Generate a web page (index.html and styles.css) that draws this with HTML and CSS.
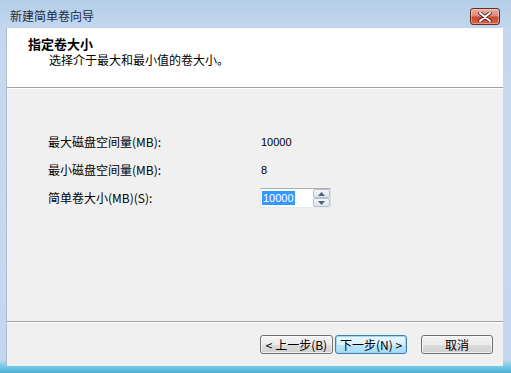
FILE: index.html
```html
<!DOCTYPE html>
<html lang="zh-CN">
<head>
<meta charset="utf-8">
<title>新建简单卷向导</title>
<link rel="stylesheet" href="styles.css">
</head>
<body>
<div class="window">
  <div class="titlebar">
    <span class="title">新建简单卷向导</span>
    <button class="close" aria-label="关闭">
      <svg width="14" height="10" viewBox="0 0 14 10">
        <path d="M2 1 L12 9 M12 1 L2 9" stroke="#5a1a12" stroke-width="3.6" stroke-linecap="round"/>
        <path d="M2 1 L12 9 M12 1 L2 9" stroke="#ffffff" stroke-width="2" stroke-linecap="round"/>
      </svg>
    </button>
  </div>
  <div class="client">
    <div class="header">
      <div class="h-title">指定卷大小</div>
      <div class="h-sub">选择介于最大和最小值的卷大小。</div>
    </div>
    <div class="main">
      <div class="fields">
        <div class="label">最大磁盘空间量(MB):</div>
        <div class="value">10000</div>
        <div class="label">最小磁盘空间量(MB):</div>
        <div class="value">8</div>
        <div class="label">简单卷大小(MB)(S):</div>
        <div class="spin">
          <div class="spin-text"><span class="sel">10000</span></div>
          <div class="spin-btns">
            <div class="sb">
              <svg width="7" height="4" viewBox="0 0 7 4"><path d="M0 4 L3.5 0 L7 4 Z" fill="#4d6185"/></svg>
            </div>
            <div class="sb">
              <svg width="7" height="4" viewBox="0 0 7 4"><path d="M0 0 L3.5 4 L7 0 Z" fill="#4d6185"/></svg>
            </div>
          </div>
        </div>
      </div>
    </div>
    <div class="footer">
      <button class="btn btn-back">&lt; 上一步(B)</button>
      <button class="btn btn-next">下一步(N) &gt;</button>
      <button class="btn btn-cancel">取消</button>
    </div>
  </div>
</div>
</body>
</html>
```

FILE: styles.css
```css
* { box-sizing: border-box; }
html, body { margin: 0; padding: 0; }
body {
  width: 511px;
  height: 373px;
  overflow: hidden;
  font-family: "Noto Sans CJK SC", "Noto Sans", sans-serif;
  font-size: 12px;
  color: #000;
}
.window {
  width: 511px;
  height: 373px;
  display: flex;
  flex-direction: column;
  padding: 0 8px 7px 6px;
  background: linear-gradient(180deg, #b4cde8 0px, #c3d8ee 30px, #c6daef 200px, #c2d7ee 360px, #6fc8e6 367px, #4aaed4 373px);
}
.titlebar {
  height: 28px;
  display: flex;
  align-items: flex-start;
  justify-content: space-between;
  margin: 0 -8px 0 -6px;
  padding: 0 11px 0 10px;
}
.title {
  margin-top: 9px;
  line-height: 14px;
  font-size: 12px;
  color: #1e2a3c;
}
.close {
  margin-top: 8px;
  width: 30px;
  height: 17px;
  padding: 0;
  border: 1px solid #6a2b22;
  border-radius: 3px;
  background: linear-gradient(180deg, #eab0a4 0%, #dc8a79 45%, #c8472f 55%, #d06a4d 100%);
  box-shadow: inset 0 0 0 1px rgba(255,255,255,0.35);
  display: flex;
  align-items: center;
  justify-content: center;
}
.client {
  flex: 1;
  display: flex;
  flex-direction: column;
  background: #f0f0f0;
  border-left: 1px solid #a9bfd6;
}
.header {
  height: 60px;
  background: #fff;
  border-bottom: 1px solid #a0a0a0;
  box-shadow: 0 1px 0 #ffffff;
  padding: 8px 0 0 21px;
}
.h-title {
  font-weight: bold;
  font-size: 13px;
  line-height: 16px;
}
.h-sub {
  padding-left: 21px;
  margin-top: 0px;
  line-height: 15px;
}
.main {
  height: 234px;
  padding: 44px 0 0 41px;
  border-bottom: 1px solid #a0a0a0;
}
.fields {
  display: grid;
  grid-template-columns: 212px auto;
  grid-auto-rows: 20px;
  row-gap: 8px;
  align-items: center;
}
.label { line-height: 20px; }
.value {
  font-family: "Liberation Sans", "Noto Sans", sans-serif;
  font-size: 11px;
  padding-left: 1px;
}
.spin {
  width: 71px;
  height: 20px;
  display: flex;
  background: #fff;
  border: 1px solid #abadb3;
  border-color: #abadb3 #dbdfe6 #e3e9ef #e2e3ea;
}
.spin-text {
  flex: 1;
  display: flex;
  align-items: center;
  padding-left: 1px;
}
.sel {
  background: #3399ff;
  color: #fff;
  font-family: "Liberation Sans", "Noto Sans", sans-serif;
  font-size: 11px;
  line-height: 14px;
  padding: 0 1px;
}
.spin-btns {
  width: 17px;
  display: flex;
  flex-direction: column;
}
.sb {
  flex: 1;
  display: flex;
  align-items: center;
  justify-content: center;
  border: 1px solid #b8bfc8;
  border-radius: 2px;
  background: linear-gradient(180deg, #f4f6f9, #dfe3e8);
}
.footer {
  flex: 1;
  border-top: 1px solid #fff;
  display: flex;
  align-items: flex-start;
  justify-content: flex-end;
  padding: 12px 10px 0 0;
}
.btn {
  height: 19px;
  width: 73px;
  padding: 0;
  font-family: "Noto Sans CJK SC", "Noto Sans", sans-serif;
  font-size: 12px;
  line-height: 16px;
  color: #000;
  border: 1px solid #707070;
  border-radius: 3px;
  background: linear-gradient(180deg, #f2f2f2 0%, #ebebeb 50%, #dddddd 51%, #cfcfcf 100%);
  box-shadow: inset 0 0 0 1px rgba(255,255,255,0.7);
}
.btn-next {
  margin-left: 2px;
  width: 72px;
  border-color: #3c7fb1;
  background: linear-gradient(180deg, #eaf6fd 0%, #d9f0fc 50%, #bee6fd 51%, #a7d9f5 100%);
  box-shadow: inset 0 0 0 1px #9fd9f4;
}
.btn-cancel {
  margin-left: 14px;
  width: 72px;
}
```
